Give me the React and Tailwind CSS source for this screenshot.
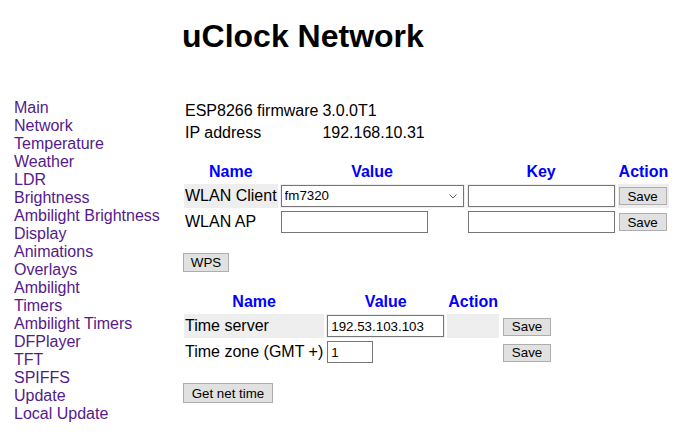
import React from 'react';

const NAV = [
    'Main', 'Network', 'Temperature', 'Weather', 'LDR', 'Brightness', 'Ambilight Brightness',
    'Display', 'Animations', 'Overlays', 'Ambilight', 'Timers', 'Ambilight Timers', 'DFPlayer',
    'TFT', 'SPIFFS', 'Update', 'Local Update'
];

const Btn = ({ children, w }) => (
    <button className={`${w} h-[18px] bg-[#e1e1e1] border border-[#adadad] text-[13.333px] leading-none text-black`}>
        {children}
    </button>
);

const Input = ({ w, value = '' }) => (
    <input
        type="text"
        defaultValue={value}
        className={`${w} h-[22px] block border border-[#767676] bg-white px-[3px] text-[13.333px] text-black outline-none`}
    />
);

const Th = ({ children }) => (
    <th className="p-px text-center font-bold text-[#0000ff]">{children}</th>
);

const App = () => {
    return (
        <div className="flex min-h-screen bg-white text-black font-['Liberation_Sans',Arial,sans-serif] text-[16px] leading-[18px]">
            {/* side menu */}
            <nav className="w-[182px] shrink-0 pl-[14px] pt-[99px]">
                {NAV.map(n => (
                    <a key={n} href="#" className="block text-[#551a8b]">{n}</a>
                ))}
            </nav>

            <main className="pt-[18px]">
                <h1 className="text-[32px] leading-[37px] font-bold">uClock Network</h1>

                <table className="mt-[44px] border-separate border-spacing-[2px]">
                    <tbody>
                        <tr>
                            <td className="p-px">ESP8266 firmware</td>
                            <td className="p-px">3.0.0T1</td>
                        </tr>
                        <tr>
                            <td className="p-px">IP address</td>
                            <td className="p-px">192.168.10.31</td>
                        </tr>
                    </tbody>
                </table>

                {/* WLAN */}
                <table className="mt-[15px] border-separate border-spacing-[2px]">
                    <thead>
                        <tr><Th>Name</Th><Th>Value</Th><Th>Key</Th><Th>Action</Th></tr>
                    </thead>
                    <tbody>
                        <tr className="bg-[#eeeeee]">
                            <td className="p-px">WLAN Client</td>
                            <td className="p-px">
                                <div className="relative">
                                    <select className="w-[183px] h-[22px] block appearance-none border border-[#767676] bg-white pl-[3px] text-[13.333px] text-black outline-none">
                                        <option>fm7320</option>
                                    </select>
                                    <svg className="absolute right-[7px] top-[9px] pointer-events-none" width="8" height="5" viewBox="0 0 8 5">
                                        <path d="M0.5 0.5 L4 4 L7.5 0.5" fill="none" stroke="#555" strokeWidth="1" />
                                    </svg>
                                </div>
                            </td>
                            <td className="p-px"><Input w="w-[147px]" /></td>
                            <td className="p-px"><Btn w="w-[48px]">Save</Btn></td>
                        </tr>
                        <tr>
                            <td className="p-px">WLAN AP</td>
                            <td className="p-px"><Input w="w-[147px]" /></td>
                            <td className="p-px"><Input w="w-[147px]" /></td>
                            <td className="p-px"><Btn w="w-[48px]">Save</Btn></td>
                        </tr>
                    </tbody>
                </table>

                <div className="mt-[17px] pl-px">
                    <button className="w-[46px] h-[19px] bg-[#e1e1e1] border border-[#adadad] text-[13.333px] leading-none text-black">WPS</button>
                </div>

                {/* Time */}
                <table className="mt-[18px] border-separate border-spacing-[2px]">
                    <thead>
                        <tr><Th>Name</Th><Th>Value</Th><Th>Action</Th></tr>
                    </thead>
                    <tbody>
                        <tr>
                            <td className="p-px bg-[#eeeeee]">Time server</td>
                            <td className="p-px bg-[#eeeeee]"><Input w="w-[117px]" value="192.53.103.103" /></td>
                            <td className="p-px bg-[#eeeeee]"></td>
                            <td className="p-px pl-[2px]"><Btn w="w-[48px]">Save</Btn></td>
                        </tr>
                        <tr>
                            <td className="p-px">Time zone (GMT +)</td>
                            <td className="p-px"><Input w="w-[46px]" value="1" /></td>
                            <td className="p-px"></td>
                            <td className="p-px pl-[2px]"><Btn w="w-[48px]">Save</Btn></td>
                        </tr>
                    </tbody>
                </table>

                <div className="mt-[17px] pl-px">
                    <button className="w-[90px] h-[20px] bg-[#e1e1e1] border border-[#adadad] text-[13.333px] leading-none text-black">Get net time</button>
                </div>
            </main>
        </div>
    );
};

export default App;
